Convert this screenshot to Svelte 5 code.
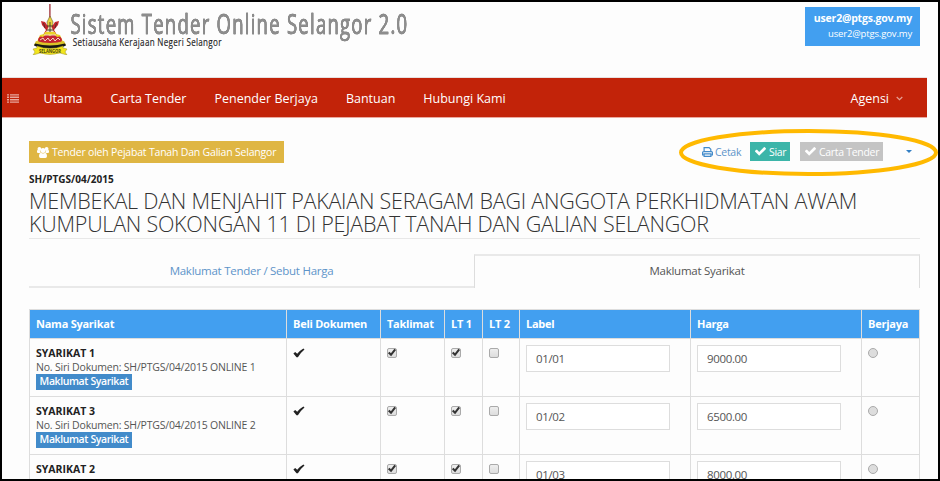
<script>
  const menu = ['Utama', 'Carta Tender', 'Penender Berjaya', 'Bantuan', 'Hubungi Kami'];
  const columns = ['Nama Syarikat', 'Beli Dokumen', 'Taklimat', 'LT 1', 'LT 2', 'Label', 'Harga', 'Berjaya'];
  const rows = [
    { name: 'SYARIKAT 1', serial: 'SH/PTGS/04/2015 ONLINE 1', label: '01/01', price: '9000.00' },
    { name: 'SYARIKAT 3', serial: 'SH/PTGS/04/2015 ONLINE 2', label: '01/02', price: '6500.00' },
    { name: 'SYARIKAT 2', serial: 'SH/PTGS/04/2015 ONLINE 3', label: '01/03', price: '8000.00' }
  ];
</script>

{#snippet tick(size)}
  <svg class="tick" width={size} height={size * 0.78} viewBox="0 0 1550 1188"><path fill="currentColor" d="M1550 232q0 40-28 68l-724 724-136 136q-28 28-68 28t-68-28l-136-136-362-362q-28-28-28-68t28-68l136-136q28-28 68-28t68 28l294 295 656-657q28-28 68-28t68 28l136 136q28 28 28 68z" /></svg>
{/snippet}

{#snippet checkbox(on)}
  <span class="box">
    {#if on}<svg width="10" height="9" viewBox="0 0 10 9"><path d="M1.7 4.6 4 6.8 8.2 1.4" fill="none" stroke="#333" stroke-width="2.1" /></svg>{/if}
  </span>
{/snippet}

<div class="frame">
  <header>
    <svg class="crest" width="38" height="51" viewBox="0 0 38 51">
      <path d="M17.9 0v15" stroke="#a33b43" stroke-width="1.4" />
      <path d="M18 12l3 6-1 8h-4l-1-8z" fill="#ead33a" stroke="#6d5b35" stroke-width=".6" />
      <path d="M9 17l4 1 4 6 1 3 1-3 4-6 4-1-1 4-4 5 3 5H11l3-5-4-5z" fill="#c8262d" />
      <path d="M13 30l3-6 2-3 2 3 3 6z" fill="#eee3bd" />
      <path d="M18 18v11M14.500 26h7M15 22h6" stroke="#3d322b" stroke-width=".9" />
      <path d="M11.500 19l1.500 5M24.500 19l-1.500 5" stroke="#4a3030" stroke-width=".9" />
      <path d="M8 31l4-1 1-2h10l1 2 4 1 4 9H4z" fill="#e9d327" />
      <path d="M6 36q1-5 5-3 3-4 7-1 4-3 7 1 4-2 5 3l-1 3H7z" fill="#c42331" />
      <path d="M8 36l3-2 2 3 3-3 2 3 3-3 2 3 3-3 2 2M12 31h12" fill="none" stroke="#f5ead2" stroke-width=".9" />
      <path d="M4 37q14 4 28 0l2 4q-16 3-32 0z" fill="#d9c328" />
      <path d="M3 39.500q15 4 30 0l1 2q-5 3-16 3t-16-3z" fill="#171714" />
      <path d="M1 45l4-1V42q13 5 26 0v2l4 1-2 3 2 3-7-2q-10 3-20 0l-7 2 2-3z" fill="#f2e51d" stroke="#9d922b" stroke-width=".5" />
      <text x="7" y="48.800" textLength="22" lengthAdjust="spacingAndGlyphs">SELANGOR</text>
    </svg>
    <svg class="brand" width="350" height="50" viewBox="0 0 350 50">
      <text class="name" x="0.4" y="31.500" textLength="338" lengthAdjust="spacingAndGlyphs">Sistem Tender Online Selangor 2.0</text>
      <text class="sub" x="2.8" y="44.300" textLength="149" lengthAdjust="spacingAndGlyphs">Setiausaha Kerajaan Negeri Selangor</text>
    </svg>
    <div class="user"><b>user2@ptgs.gov.my</b><span>user2@ptgs.gov.my</span></div>
  </header>

  <nav>
    <svg class="list" width="12" height="9" viewBox="0 0 12 9"><path d="M0 .9h2M3 .9h9M0 3.3h2M3 3.3h9M0 5.7h2M3 5.7h9M0 8.1h2M3 8.1h9" stroke="#e8a79d" stroke-width="1.4" /></svg>
    {#each menu as item}<a href="#top">{item}</a>{/each}
    <a href="#top" class="agency">Agensi <svg width="7" height="5" viewBox="0 0 7 5"><path d="M.7 1l2.8 2.7L6.3 1" fill="none" stroke="#e6a196" stroke-width="1.2" /></svg></a>
  </nav>

  <main>
    <div class="toolbar">
      <span class="owner">
        <svg width="12" height="11" viewBox="0 0 12 11"><g fill="#fff"><circle cx="2.4" cy="2" r="1.9" /><circle cx="9.6" cy="2" r="1.9" /><circle cx="6" cy="3.6" r="2.5" /><path d="M0 4.1q0-1 1-1l2.2.8L3.600 6H1Q0 6 0 5zM12 4.100q0-1-1-1l-2.200.8L8.400 6H11q1 0 1-1zM2 8.900Q2 6 3.800 5.800q2.200 1.400 4.400 0Q10 6 10 8.900 10 11 8.400 11H3.600Q2 11 2 8.900z" /></g></svg>
        <span>Tender oleh Pejabat Tanah Dan Galian Selangor</span>
      </span>
      <div class="actions">
        <a class="print" href="#top"><svg width="11" height="10" viewBox="0 0 11 10"><path d="M2.1 5V.6h5l1.7 1.7V5M2.1 8H.6V5.5q0-.9.9-.9h8q.9 0 .9.9V8H8.9M2.1 6.8h6.8v2.6H2.1z" fill="none" stroke="#428bca" stroke-width="1.2" /></svg><span>Cetak</span></a>
        <span class="btn publish">{@render tick(11)}<span>Siar</span></span>
        <span class="btn chart">{@render tick(11)}<span>Carta Tender</span></span>
        <i class="caret"></i>
      </div>
      <svg class="ring" width="262" height="52" viewBox="0 0 262 52"><ellipse cx="129.5" cy="24.500" rx="127.5" ry="21.5" fill="none" stroke="#ffb900" stroke-width="4" /></svg>
    </div>

    <div class="code">SH/PTGS/04/2015</div>
    <h1><span>MEMBEKAL DAN MENJAHIT PAKAIAN SERAGAM BAGI ANGGOTA PERKHIDMATAN AWAM</span><span>KUMPULAN SOKONGAN 11 DI PEJABAT TANAH DAN GALIAN SELANGOR</span></h1>

    <div class="tabs"><a href="#top">Maklumat Tender / Sebut Harga</a><span>Maklumat Syarikat</span></div>

    <table>
      <colgroup><col style="width:257px" /><col style="width:94px" /><col style="width:64px" /><col style="width:38px" /><col style="width:37px" /><col style="width:171px" /><col style="width:171px" /><col style="width:58px" /></colgroup>
      <thead><tr>{#each columns as c}<th>{c}</th>{/each}</tr></thead>
      <tbody>
        {#each rows as r}
          <tr>
            <td class="company"><b>{r.name}</b><p>No. Siri Dokumen: {r.serial}</p><span class="info">Maklumat Syarikat</span></td>
            <td><span class="bought"><svg width="12" height="10" viewBox="0 0 12 10"><path d="M.4 5.5 2.2 4l2 1.8Q6.8 2.4 10.4.4l1.1 1.2Q7.8 4.6 4.9 9.3L3.5 9.3Z" fill="#222" /></svg></span></td>
            <td>{@render checkbox(true)}</td>
            <td>{@render checkbox(true)}</td>
            <td>{@render checkbox(false)}</td>
            <td><div class="field">{r.label}</div></td>
            <td><div class="field">{r.price}</div></td>
            <td><span class="radio"></span></td>
          </tr>
        {/each}
      </tbody>
    </table>
  </main>
</div>

<style>
  :global(body) { margin: 0; overflow: hidden; }
  .frame { box-sizing: border-box; width: 940px; height: 481px; border: 2px solid #000; background: #fdfdfd; overflow: hidden; font: 11px/14px "Open Sans", sans-serif; color: #555; }
  a { text-decoration: none; color: #5e94c9; }
  header { display: flex; height: 76px; align-items: flex-start; }
  .crest { margin: 2px 0 0 30px; flex: none; }
  .crest text { font: bold 5px "Open Sans", sans-serif; fill: #4b4611; }
  .brand { flex: none; overflow: visible; }
  .name { font: 26.5px "Ubuntu Condensed", "Open Sans", sans-serif; letter-spacing: 1.8px; fill: #8e8e8e; stroke: #8e8e8e; stroke-width: .5px; filter: drop-shadow(.6px .8px 0 #666); }
  .sub { font: 10.5px "Ubuntu Condensed", "Open Sans", sans-serif; letter-spacing: .4px; fill: #222; stroke: #222; stroke-width: .15px; }
  .user { box-sizing: border-box; width: 115px; height: 39px; margin: 5px 18px 0 auto; padding: 3px 8px 0; background: #429ff0; color: #fff; text-align: right; font-size: 9.5px; letter-spacing: -.15px; white-space: nowrap; }
  .user b, .user span { display: block; height: 16px; line-height: 16px; }
  .user b { font-size: 10.5px; letter-spacing: -.2px; }
  nav { box-sizing: border-box; display: flex; align-items: center; width: 925px; height: 39px; padding: 2px 24px 0 5px; background: #c22309; gap: 28px; box-shadow: 0 -1px #e7e1e1, 0 1px #eba89e; }
  nav a { color: #fff; font-size: 12.5px; line-height: 37px; white-space: nowrap; }
  .list { margin-right: -3.5px; }
  .agency { margin-left: auto; display: flex; align-items: center; gap: 7px; }
  main { width: 891px; margin-left: 27px; }
  .toolbar { position: relative; display: flex; justify-content: space-between; padding-top: 24px; height: 22px; }
  .owner { box-sizing: border-box; display: flex; align-items: center; gap: 3px; width: 255px; height: 22px; padding-left: 8px; background: #dfb643; color: #fff; font-size: 10.5px; letter-spacing: -.2px; white-space: nowrap; }
  .actions { display: flex; height: 19px; margin-top: 1px; font-size: 10.5px; letter-spacing: -.3px; white-space: nowrap; }
  .print, .btn { display: flex; align-items: center; gap: 3px; }
  .print { width: 48px; gap: 2px; }
  .btn { color: #fff; box-sizing: border-box; padding-left: 5px; }
  .publish { width: 40px; background: #3cb5a9; }
  .chart { width: 83px; margin-left: 10px; background: #c4c4c4; }
  .caret { border: 3px solid transparent; border-top-color: #337fc4; border-bottom: 0; width: 0; height: 0; margin: 8px 8px 0 23px; }
  .ring { position: absolute; left: 650px; top: 11px; }
  .code { margin-top: 8px; height: 16px; line-height: 16px; color: #222; font-weight: 700; font-size: 10px; }
  h1 { margin: 0; padding-top: 2px; height: 49px; border-bottom: 1px solid #e8e8e8; font-size: 21.5px; line-height: 23px; font-weight: 300; letter-spacing: -.24px; color: #333; white-space: nowrap; }
  h1 span { display: block; }
  .tabs { display: flex; height: 34px; margin-top: 15px; font-size: 11.5px; letter-spacing: -.26px; line-height: 33px; text-align: center; }
  .tabs a { box-sizing: border-box; width: 445px; border-bottom: 2px solid #e9e9e9; }
  .tabs span { box-sizing: border-box; width: 446px; border: 1px solid #ddd; border-top: 2px solid #e9e9e9; border-bottom: 0; line-height: 29px; }
  table { width: 891px; margin-top: 21px; table-layout: fixed; border-collapse: collapse; }
  th, td { box-sizing: border-box; padding: 0 0 0 6px; border: 1px solid #ddd; text-align: left; vertical-align: top; }
  th { height: 29px; background: #429ff0; color: #fff; font-size: 11px; letter-spacing: -.25px; line-height: 28px; white-space: nowrap; }
  td { height: 58px; }
  .company b { display: block; margin-top: 7px; color: #222; font-size: 10.5px; line-height: 14px; }
  .company p { margin: 0; line-height: 14px; font-size: 10.5px; letter-spacing: -.19px; white-space: nowrap; }
  .info { display: block; box-sizing: border-box; width: 96px; height: 16px; background: #428bca; color: #fff; text-align: center; font-size: 10.5px; letter-spacing: -.4px; line-height: 15px; font-weight: 600; }
  .bought { display: block; margin: 9px 0 0; height: 10px; line-height: 0; }
  .box { display: block; box-sizing: border-box; width: 10px; height: 10px; margin-top: 9px; border: 1px solid #aaa; border-radius: 2px; background: linear-gradient(#eee, #ddd); line-height: 0; }
  .box svg { margin: -1px; }
  .field { box-sizing: border-box; width: 144px; height: 27px; margin-top: 6px; border: 1px solid #ddd; padding-left: 9px; background: #fff; font-size: 11.5px; letter-spacing: -.35px; line-height: 25px; }
  .radio { display: block; box-sizing: border-box; width: 10px; height: 10px; margin-top: 9px; border: 1px solid #aaa; border-radius: 50%; background: #ddd; }
</style>
